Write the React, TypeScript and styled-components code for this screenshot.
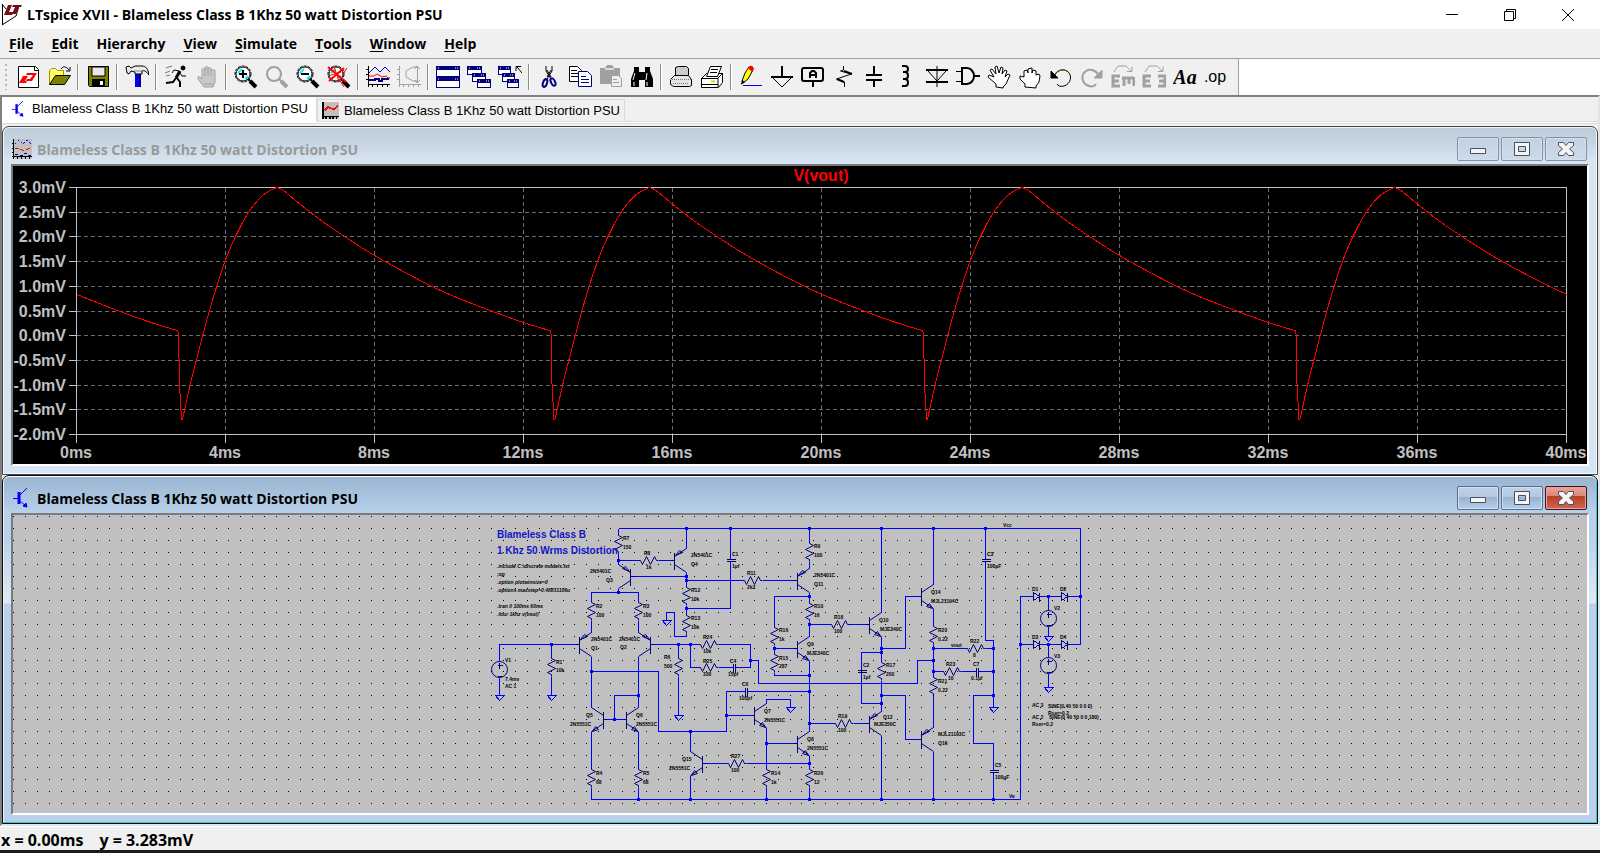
import React from "react";
import styled, { createGlobalStyle, css } from "styled-components";

const UI = `"Open Sans", "Noto Sans", sans-serif`;
const ARIAL = `"Liberation Sans", Arial, sans-serif`;

const GlobalStyle = createGlobalStyle`
  * { box-sizing: border-box; }
  body { margin: 0; background: #f0f0f0; }
  button { margin: 0; padding: 0; border: 0; background: none; font: inherit; color: inherit; }
  svg { display: block; }
`;

/* ---------- frame ---------- */

const Shell = styled.div`
  display: flex;
  flex-direction: column;
  min-height: 100vh;
  font-family: ${UI};
  color: #000;
  background: #f0f0f0;
`;

const TitleBar = styled.header`
  display: flex;
  align-items: center;
  height: 29px;
  padding-right: 3px;
  background: #fff;
`;

const AppTitle = styled.h1`
  flex: 1;
  margin: 0 0 0 5px;
  font-size: 14px;
  line-height: 28px;
  font-weight: 700;
`;

const SystemButton = styled.button`
  display: flex;
  align-items: center;
  justify-content: center;
  width: 58px;
  height: 29px;
`;

const MenuBar = styled.nav`
  display: flex;
  height: 30px;
  border-bottom: 1px solid #a0a0a0;
`;

const MenuItem = styled.button`
  padding: 0 9px;
  font-size: 14px;
  line-height: 28px;
  font-weight: 700;
  u { text-underline-offset: 2px; }
`;

const ToolbarRow = styled.div`
  display: flex;
  height: 36px;
  background: #fff;
`;

const Toolbar = styled.div`
  display: flex;
  align-items: center;
  padding: 0 7px 0 5px;
  border-right: 1px solid #a0a0a0;
  background: #f0f0f0;
`;

const Grip = styled.span`
  width: 2px;
  height: 26px;
  margin-right: 5px;
  background: repeating-linear-gradient(#b8b8b8 0 2px, transparent 2px 5px);
`;

const ToolButton = styled.button`
  display: flex;
  align-items: center;
  justify-content: center;
  width: 31px;
  height: 30px;
`;

const Separator = styled.span`
  width: 2px;
  height: 26px;
  margin: 0 3px;
  border-left: 1px solid #8c8c8c;
  border-right: 1px solid #fff;
`;

const Workspace = styled.main`
  flex: 1;
  border: 2px solid;
  border-color: #808080 #e3e3e3 #e3e3e3 #808080;
  background: #f0f0f0;
`;

const TabStrip = styled.div`
  display: flex;
  align-items: flex-start;
  height: 29px;
  background: linear-gradient(#f0f0f0 24px, #d9d9d9 24px 25px, #fff 25px 26px, #d9d9d9 26px 27px, #f0f0f0 27px);
`;

const Tab = styled.button<{ $active?: boolean }>`
  display: flex;
  align-items: center;
  border: 1px solid #d9d9d9;
  font-family: ${ARIAL};
  font-size: 13px;
  line-height: 20px;
  white-space: nowrap;
  ${(p) =>
    p.$active
      ? css`
          gap: 5px;
          height: 25px;
          padding: 0 8px 2px;
          border-color: #fff #d9d9d9 #fff #fff;
          background: #fff;
        `
      : css`
          gap: 5px;
          height: 23px;
          margin-top: 2px;
          padding: 0 4px;
          background: #f0f0f0;
        `}
`;

/* ---------- child windows ---------- */

const ChildWindow = styled.section<{ $active?: boolean }>`
  padding: 1px 8px 8px;
  border: 1px solid ${(p) => (p.$active ? "#0a0a0a" : "#45454f")};
  border-radius: 7px 7px 0 0;
  ${(p) =>
    p.$active
      ? css`
          background: linear-gradient(#99b4d1, #b9d1ea 37px, #b9d1ea 60px, #dfeaf6 127px, #b9d1ea 128px);
          box-shadow: inset 0 1px #fff, inset -1px -1px #2fc7dd, inset 1px 0 #e8f2fb;
        `
      : css`
          background: linear-gradient(#bfcddb, #c5d3e1 14px, #d7e4f2 34px);
          box-shadow: inset 0 1px #eef3f8, inset -1px -1px #f4f8fc, inset 1px 0 #f4f8fc;
        `}
`;

const ChildTitle = styled.div`
  display: flex;
  align-items: center;
  height: 36px;
  padding: 6px 2px 0 1px;
`;

const ChildCaption = styled.h2<{ $active?: boolean }>`
  flex: 1;
  margin: 0 0 0 5px;
  padding-top: 2px;
  font-size: 14px;
  line-height: 24px;
  font-weight: 700;
  color: ${(p) => (p.$active ? "#000" : "#999")};
`;

const CaptionButtons = styled.div`
  display: flex;
  gap: 2px;
`;

const CaptionButton = styled.button<{ $tone: "faded" | "blue" | "red" }>`
  display: flex;
  align-items: center;
  justify-content: center;
  width: 42px;
  height: 24px;
  border-radius: 2px;
  ${(p) =>
    p.$tone === "faded"
      ? css`
          border: 1px solid #8492b0;
          background: linear-gradient(#c3d1e0, #cddbe9);
          box-shadow: inset 0 0 0 1px #d5e0ec;
        `
      : p.$tone === "blue"
        ? css`
            border: 1px solid #5c6f90;
            background: linear-gradient(#bed2e8, #b3c9e2 45%, #98b1cd 46%, #b4cfec);
            box-shadow: inset 0 0 0 1px #cfe0f2;
          `
        : css`
            border: 1px solid #43131b;
            background: linear-gradient(#e7a59a, #db8676 42%, #b7402a 43%, #cf6650);
            box-shadow: inset 0 0 0 1px #e5a698;
          `}
`;

const Client = styled.div<{ $dark?: boolean }>`
  border: 2px solid;
  border-color: #7a7a7a #fff #fff #7a7a7a;
  background: ${(p) => (p.$dark ? "#000" : "#c0c0c0")};
  svg { width: 100%; height: auto; }
`;

const StatusBar = styled.footer`
  display: flex;
  gap: 16px;
  height: 27px;
  padding-left: 1px;
  border-top: 1px solid #fff;
  border-bottom: 3px solid #1c1c1c;
  font-size: 16px;
  line-height: 26px;
  font-weight: 700;
`;

/* ---------- toolbar icons ---------- */

const K = "#000";
const N = "#000080";
const G = "#a0a0a0";

const Lens = ({ c = K, mark }: { c?: string; mark?: React.ReactNode }) => (
  <g fill="none" stroke={c}>
    <circle cx="9" cy="9" r="7" strokeWidth={c === K ? 1 : 2} fill={c === K ? "#fff" : "none"} />
    {c === K && <circle cx="9" cy="9" r="8" strokeDasharray="3 1" />}
    {c === K && <path d="M4 8l4-4M11 14l3-3" stroke="#0ee" strokeWidth="2" />}
    <path d="M14 14l2 2" strokeWidth="2" />
    <path d="M16 16l6 6" strokeWidth="4" />
    {mark}
  </g>
);

const Pane = ({ x, y, w = 11, h = 9 }: { x: number; y: number; w?: number; h?: number }) => (
  <g>
    <rect x={x + 0.5} y={y + 0.5} width={w - 1} height={h - 1} fill="#fff" stroke={N} />
    <rect x={x} y={y} width={w} height="4" fill={N} />
    <path d={`M${x + 2} ${y + 2}h1M${x + w - 5} ${y + 2}h1M${x + w - 3} ${y + 2}h1`} stroke="#fff" />
  </g>
);

const icons: Record<string, React.ReactNode> = {
  "New schematic": (
    <g>
      <path d="M2.500 1.500h17l3 3v18h-20z" fill="#fff" stroke={K} />
      <path d="M18.500 1.500v4h4" fill="none" stroke={K} />
      <path d="M7 11h5l-3 5h2l-1 2H3zM11 8h10l-5 8h-6l1-2h3l3-4h-7z" fill="#f00" />
    </g>
  ),
  Open: (
    <g stroke={K}>
      <path d="M2.500 19.500v-14l2-2h4l2 2h6v6h-7z" fill="#ff6" stroke="#a09000" />
      <path d="M2.500 19.500l6-9h15l-6 9z" fill="#808000" />
      <path d="M14 4c2-3 5-3 8 1M23 2v4h-4" fill="none" />
    </g>
  ),
  Save: (
    <g>
      <path d="M2.500 1.500h20v20h-19l-1-1z" fill="#808000" stroke={K} />
      <rect x="6" y="2" width="13" height="9" fill="#e8e8e8" stroke={K} />
      <rect x="6" y="14" width="13" height="8" fill={K} />
      <rect x="14" y="16" width="3" height="4" fill="#fff" />
    </g>
  ),
  "Control panel": (
    <g>
      <path d="M10 9h6v13h-6z" fill="#00f" />
      <path d="M14 9h2v13h-2z" fill={N} />
      <path d="M1 2l3-1 2 2 4-2h7c4 0 6 3 7 9-3-4-5-5-7-4v3h-7v-2l-4-1-2 3-2-1z" fill="#e8e8e8" stroke={K} />
      <path d="M9 6h8" stroke="#888" />
    </g>
  ),
  Run: (
    <g fill="none" stroke={K}>
      <circle cx="19" cy="3" r="2" fill={K} />
      <path d="M16 6l-4 7" strokeWidth="3" />
      <path d="M15 6l-5-1-2 3M16 8l2 3h4" />
      <path d="M12 13l-3 4-7 1M13 13l3 4v5" strokeWidth="2" />
      <path d="M2 3l6-2M1 8l5-2M2 11l4-1" stroke="#777" />
    </g>
  ),
  Halt: (
    <g stroke={G}>
      <path
        d="M7 14V5c0-2 3-2 3 0V3c0-2 3-2 3 0v1c0-2 3-2 3 0v2c0-2 4-2 4 0v11l-2 5h-9l-6-8c-1-2 1-3 2-2z"
        fill="#c8c8c8"
      />
      <path d="M10 5v6M13 4v7M16 6v5M9 19h9" />
    </g>
  ),
  "Zoom in": <Lens mark={<path d="M9 5v8M5 9h8" strokeWidth="2" />} />,
  Pan: <Lens c={G} />,
  "Zoom out": <Lens mark={<path d="M5 9h8" strokeWidth="2" />} />,
  "Zoom full": (
    <Lens
      mark={
        <g stroke="#f00">
          <path d="M1 2l18 15M17 3L2 16" strokeWidth="2" />
          <path d="M7 1l5 16M1 11l13-4M12 14l5 8M16 9l4-6" />
        </g>
      }
    />
  ),
  Autorange: (
    <g fill="none" stroke={K}>
      <path d="M2.500 1v21M2 19.500h22M0 4.500h3M0 9.500h3M0 14.500h3M6.500 19v3M11.500 19v3M16.500 19v3M21.500 19v3" />
      <path d="M3 8l6-6 5 5 5-5 5 5" stroke="#00c" />
      <path d="M3 11h5l3-2 5 3 4-1 2 2h2" stroke="#f00" />
      <path d="M3 15h6v-1h4v2h3v-2h7" stroke={N} strokeWidth="2" />
    </g>
  ),
  Plot: (
    <g fill="none" stroke={G}>
      <path d="M2.500 1v21M2 19.500h22M0 4.500h3M0 9.500h3M0 14.500h3M6.500 19v3M11.500 19v3M16.500 19v3M21.500 19v3" />
      <path d="M20 2h-4l-7 4v6l7 4h4M20.500 2v15M18 4l2-3 3 3M18 15l2 3 3-3" />
    </g>
  ),
  "Tile windows": (
    <g>
      <Pane x={0} y={1} w={24} h={11} />
      <Pane x={0} y={12} w={24} h={11} />
    </g>
  ),
  "Cascade windows": (
    <g>
      <Pane x={0} y={1} w={15} />
      <Pane x={5} y={8} w={14} />
      <Pane x={10} y={14} w={14} />
    </g>
  ),
  "Close windows": (
    <g>
      <Pane x={0} y={1} w={13} />
      <Pane x={4} y={8} w={13} />
      <Pane x={9} y={14} w={12} />
      <path d="M24 8l-5-6M18 6V1.500h5" fill="none" stroke={K} />
    </g>
  ),
  Cut: (
    <g fill="none">
      <path d="M9 1v5l5 8M15 1v5l-5 8" stroke={K} />
      <path d="M10 5l4 7M14 5l-4 7" stroke={K} />
      <ellipse cx="8" cy="18" rx="2" ry="4" stroke={N} strokeWidth="2" transform="rotate(20 8 18)" />
      <ellipse cx="16" cy="17" rx="2" ry="4" stroke={N} strokeWidth="2" transform="rotate(-25 16 17)" />
    </g>
  ),
  Copy: (
    <g fill="#fff">
      <path d="M1.500 1.500h8l4 4v11h-12z" stroke={K} />
      <path d="M3 5.500h6M3 8.500h8M3 11.500h8" stroke={K} />
      <path d="M10.500 6.500h9l4 4v11h-13z" stroke={N} />
      <path d="M13 11.500h5M13 14.500h8M13 17.500h8" stroke={N} />
    </g>
  ),
  Paste: (
    <g>
      <path d="M1 3h5l2-3h5l2 3h6v16H1z" fill={G} />
      <path d="M6 4h9" stroke="#ddd" strokeWidth="2" />
      <path d="M12.500 10.500h7l3 3v8h-10z" fill="#eee" stroke={G} />
      <path d="M14 14.500h4M14 17.500h6" stroke={G} />
    </g>
  ),
  Find: (
    <g fill={K}>
      <path d="M4 2h5v5h6V2h5v4l3 8v8h-8v-7h-6v7H1v-8l3-8z" />
      <path d="M5 8l-2 7M17 8l-1 7M4 17v4M17 17v4" stroke="#fff" />
    </g>
  ),
  "Print setup": (
    <g fill="#e4e4e4" stroke={K}>
      <path d="M6.500 10.500v-8l3-1h8l2 2v7" fill="#ccc" />
      <path d="M1.500 14.500l4-4h14l3 4v6l-2 1h-16l-3-2z" />
      <path d="M1 14.500h21M4 18.500h15" stroke="#777" strokeDasharray="1 1" />
    </g>
  ),
  Print: (
    <g fill="#fff" stroke={K}>
      <path d="M1.500 13.500l5-5h16v9l-4 5h-17z" />
      <path d="M6.500 11.500l4-10h11l-4 10z" />
      <path d="M11 4.500h7M10 7.500h7M1 13.500h17v9M18 13l5-5M2 19.500h16" />
      <path d="M11 16.500h4" stroke="#dd0" strokeWidth="2" />
    </g>
  ),
  "Draw wire": (
    <g>
      <path d="M3 16l3-8 4-6 4 3-5 9-5 4z" fill="#ff0" stroke={K} />
      <path d="M9 3c1-3 5-3 6 1l-2 3z" fill="#f00" />
      <path d="M2 20l1-5 3 2z" fill={K} />
      <path d="M4 20.500h19" stroke="#00f" />
    </g>
  ),
  Ground: (
    <g fill="none" stroke={K}>
      <path d="M12 1v11" strokeWidth="2" />
      <path d="M1 12h22" strokeWidth="2" />
      <path d="M2 12l10 10 10-10" />
    </g>
  ),
  "Label net": (
    <g fill="none" stroke={K} strokeWidth="2">
      <rect x="1" y="3" width="21" height="13" rx="2" />
      <path d="M12 16v6M9 13V8l2-2h2l2 2v5M9 10h6" />
    </g>
  ),
  Resistor: (
    <g fill="none" stroke={K}>
      <path d="M11.500 1v4l-3 1 11 3-15 5 8 3v5" />
      <path d="M12 6l8 3M5 14l7 3" strokeWidth="2" />
    </g>
  ),
  Capacitor: (
    <g stroke={K} strokeWidth="2">
      <path d="M11 1v8M11 15v7" />
      <path d="M3 10h16M3 15h16" />
    </g>
  ),
  Inductor: (
    <path d="M8 1h3c4 0 4 6 0 6H9h2c4 0 4 7 0 7H9h2c4 0 4 7 0 7H8" fill="none" stroke={K} strokeWidth="2" />
  ),
  Diode: (
    <g fill="none" stroke={K}>
      <path d="M12 1v21M3 6l9 10 9-10" />
      <path d="M1 5h22M1 17h22" strokeWidth="2" />
    </g>
  ),
  Component: (
    <g fill="none" stroke={K}>
      <path d="M0 6.500h6M0 16.500h6" />
      <path d="M6 3v16h5c4 0 7-4 7-8s-3-8-7-8zM18 11h6" strokeWidth="2" />
    </g>
  ),
  Move: (
    <path
      d="M9 22v-3L1 12l1-2 5 2-4-7 2-1 4 5-1-7 2-1 2 7 2-6 2 1-1 6 3-4 2 1-2 6 3-3 2 1-4 9-3 3v1z"
      fill="#fff" stroke={K}
    />
  ),
  Drag: (
    <path
      d="M7 22v-3l-5-5v-3l4 1V6l3-1 1 3V4l4-1v5l1-3 3 1v4l3-1 1 2-1 6-3 4v2z"
      fill="#fff" stroke={K}
    />
  ),
  Undo: (
    <g fill="none" stroke={K}>
      <path d="M5 11c2-5 8-8 13-5 6 4 4 13-3 15-3 1-6 0-7-2" />
      <path d="M6 10c3-5 8-6 12-4" stroke="#665c00" />
      <path d="M2 6v7h7zM4 10l-2 3" fill={K} />
    </g>
  ),
  Redo: (
    <g fill="none" stroke={G}>
      <path d="M19 11C17 6 11 3 6 6c-6 4-4 13 3 15 3 1 6 0 7-2" strokeWidth="2" />
      <path d="M22 5v8h-8z" fill={G} />
    </g>
  ),
  Rotate: (
    <g fill="none" stroke={G}>
      <path d="M3 7l4-6h8l5 5M21 1.500v5h-5" />
      <path d="M9 11H2v10h7M2 16h6M11 13h12M13 13v8M18 13v6M23 12v9" strokeWidth="3" />
    </g>
  ),
  Mirror: (
    <g fill="none" stroke={G}>
      <path d="M3 7l4-6h8l5 5M21 1.500v5h-5" />
      <path d="M9 11H2v10h7M2 16h6M16 11h7v10h-7M23 16h-6" strokeWidth="3" />
    </g>
  ),
  Text: (
    <text x="12" y="19" textAnchor="middle" fontFamily="'Liberation Serif', serif" fontSize="20" fontWeight="700" fontStyle="italic">
      Aa
    </text>
  ),
  "SPICE directive": (
    <text x="11" y="17" textAnchor="middle" fontFamily="'Liberation Sans', sans-serif" fontSize="16">
      .op
    </text>
  ),
};

const toolbarGroups: string[][] = [
  ["New schematic", "Open"],
  ["Save"],
  ["Control panel"],
  ["Run", "Halt"],
  ["Zoom in", "Pan", "Zoom out", "Zoom full"],
  ["Autorange", "Plot"],
  ["Tile windows", "Cascade windows", "Close windows"],
  ["Cut", "Copy", "Paste", "Find"],
  ["Print setup", "Print"],
  ["Draw wire", "Ground", "Label net", "Resistor", "Capacitor", "Inductor", "Diode", "Component", "Move", "Drag",
    "Undo", "Redo", "Rotate", "Mirror", "Text", "SPICE directive"],
];

const AppLogo = () => (
  <svg width="22" height="26" viewBox="0 0 22 26">
    <path d="M2.500 2v21M2 23l14-9M19 4l-3 10M2 2l4 5" fill="none" stroke="#000" />
    <path d="M8 3h4l-3 7h4l-1 3H4zM13 3h9l-1 2h-2l-3 7h-4l3-7h-3z" fill="#7a0c14" />
  </svg>
);

const TransistorIcon = ({ size }: { size: number }) => (
  <svg width={size} height={size} viewBox="0 0 20 20" fill="none" stroke="#00f">
    <path d="M1 10.500h6M8 7l7-7M8 13l7 6" />
    <path d="M7 4v12" strokeWidth="3" />
    <path d="M15 19l-4-1 3-3z" fill="#00f" />
  </svg>
);

const TraceIcon = ({ size, full }: { size: number; full?: boolean }) => (
  <svg width={size} height={size} viewBox="0 0 20 20" fill="none" shapeRendering="crispEdges">
    <path d="M1 0h19v20H1z" fill="#c0c0c0" />
    <path d="M1.500 0v20M0 17h20M0 4h2M0 9h2M0 13h2M5 17v3M9 17v3M13 17v3M17 17v3" stroke="#000" strokeWidth={full ? 1 : 2} />
    {full && <path d="M3 5l4-4 4 4 4-4 4 4" stroke="#00f" strokeDasharray="2 2" />}
    {full && <path d="M3 15h4v1h4v-2h4v2h4" stroke="#000080" strokeDasharray="3 3" />}
    <path
      d={full ? "M3 9h4l3 2h4l4-2" : "M3 10l4-4 5 2h3l4-4"}
      stroke="#f00"
      strokeWidth={full ? 1 : 2}
      strokeDasharray={full ? "4 2" : undefined}
    />
  </svg>
);

/* ---------- waveform plot ---------- */

type Point = [number, number];

const X0 = 76;
const MS = 37.25;
const Y0 = 187;
const STEP = 24.7;
const edge: Point[] = [[177, 330], [178, 333], [179, 383], [181, 419], [182, 419]];
const sweep: Point[] = [
  [182, 419], [190, 383], [202, 336], [209, 310], [218, 280], [226, 257], [235, 236], [248, 212], [262, 195], [276, 187],
];
const decay: Point[] = [
  [276, 187], [283, 190], [300, 204], [322, 221], [344, 236], [374, 255], [414, 277], [449, 294], [495, 312],
  [523, 322], [549, 330],
];

/* Catmull-Rom interpolation through the sample points */
const smooth = (pts: Point[]): Point[] =>
  pts.slice(0, -1).flatMap((p1, i) => {
    const p0 = pts[Math.max(i - 1, 0)];
    const p2 = pts[i + 1];
    const p3 = pts[Math.min(i + 2, pts.length - 1)];
    return [0, 0.25, 0.5, 0.75].map(
      (t) =>
        [0, 1].map(
          (k) =>
            0.5 *
            (2 * p1[k] +
              (p2[k] - p0[k]) * t +
              (2 * p0[k] - 5 * p1[k] + 4 * p2[k] - p3[k]) * t * t +
              (3 * p1[k] - p0[k] - 3 * p2[k] + p3[k]) * t * t * t),
        ) as Point,
    );
  });

const cycle = [...edge, ...smooth(sweep), ...smooth(decay)];
const trace = [-1, 0, 1, 2, 3]
  .flatMap((k) => cycle.map(([x, y]) => [x + k * 372.5, y] as Point))
  .filter(([x]) => x >= X0 && x <= 1567);

const PlotView = () => (
  <svg viewBox="13 166 1574 298" fontFamily={ARIAL} fontSize="16" fontWeight="700" fill="#c0c0c0">
    <g transform="translate(.5 .5)" fill="none" shapeRendering="crispEdges">
      <g stroke="#6e6e6e" strokeDasharray="4 3">
        {Array.from({ length: 9 }, (_, i) => (
          <path key={i} d={`M${X0} ${Math.round(Y0 + (i + 1) * STEP)}H1566`} />
        ))}
        {Array.from({ length: 9 }, (_, i) => (
          <path key={i} d={`M${Math.round(X0 + (i + 1) * 4 * MS)} ${Y0}V434`} />
        ))}
      </g>
      <g stroke="#c0c0c0">
        <path d="M68 187H1566V442M76 187V442M68 434H1566" />
        {Array.from({ length: 9 }, (_, i) => (
          <path key={i} d={`M68 ${Math.round(Y0 + (i + 1) * STEP)}H76M${Math.round(X0 + (i + 1) * 4 * MS)} 434V442`} />
        ))}
      </g>
      <polyline points={trace.map((p) => p.join(",")).join(" ")} stroke="#f00" />
    </g>
    <text x="821" y="181" textAnchor="middle" fill="#f00">V(vout)</text>
    {Array.from({ length: 11 }, (_, i) => (
      <text key={i} x="66" y={Math.round(Y0 + i * STEP) + 6} textAnchor="end">
        {(3 - i * 0.5).toFixed(1)}mV
      </text>
    ))}
    {Array.from({ length: 11 }, (_, i) => (
      <text key={i} x={Math.round(X0 + i * 4 * MS)} y="458" textAnchor="middle">
        {i * 4}ms
      </text>
    ))}
  </svg>
);

/* ---------- schematic ---------- */

const dots = Array.from({ length: 132 }, (_, i) => 13 + Math.round((1565 * i) / 131))
  .flatMap((x) => Array.from({ length: 25 }, (_, j) => `M${x} ${516 + 12 * j - (j > 12 ? 1 : 0)}h1`))
  .join("");

const wires = [
  "M618 528H1080V644H1068M1068 596H1080M618 528V533M618 553V564M618 560H638M658 560H670",
  "M634 576H686M686 572V585M686 580H742M762 580H793M686 528V548M618 588V592M591 600V592H638V600",
  "M591 620V632M638 620V632M575 644H499V661M499 677V695M551 644V656M551 676V695M591 656V707",
  "M591 671H658V731H726V691H744M748 691H809M726 715H750M638 656V707M638 695H614V719M607 719H622",
  "M591 731V767M591 787V799M638 731V767M638 787V799M591 799H1020V596H1032M1020 644H1032",
  "M654 644H698M690 644V667H698M678 644V656M678 676V715M718 644H750V667H736M718 667H732",
  "M750 660H758V683H917V660H933M686 605V613M686 608H730V562M730 558V528M686 633V636H674V612H666V620",
  "M809 528V541M809 561V568M809 592V601M809 596H774V625M774 645V652M774 648H793M774 672V675H809",
  "M809 621V636M809 624H829M849 624H865M809 660V731M809 723H833M853 723H865M766 703V699H790V707",
  "M766 727V767M766 743H793M766 787V799M809 755V767M746 763H809M706 763H726M690 731V751M690 775V799M809 787V799",
  "M881 528V612M881 636V660M881 652H861V669M861 673V703H881M881 680V711M881 735V799M881 648H905V596H917",
  "M881 695H905V739H917M933 528V584M933 608V624M933 644V675M933 648H965M985 648H993M933 671H941",
  "M961 671H975M979 671H993M933 695V727M933 751V799M985 528V558M985 562V640H993V707M993 695H973V743H993V769M993 773V799",
  "M1039 596H1061M1048 596V610M1048 626V636M1039 644H1061M1048 644V657M1048 673V687",
].join("");

const nodes: Point[] = [
  [686, 528], [730, 528], [809, 528], [881, 528], [933, 528], [985, 528], [618, 560], [686, 576], [686, 580],
  [618, 592], [686, 608], [809, 596], [551, 644], [591, 671], [678, 644], [690, 644], [638, 695], [614, 719],
  [690, 731], [726, 715], [750, 660], [774, 648], [809, 624], [809, 675], [809, 691], [809, 723], [766, 743],
  [809, 763], [638, 799], [690, 799], [766, 799], [809, 799], [881, 799], [933, 799], [993, 799], [881, 648],
  [881, 652], [881, 695], [881, 703], [933, 648], [933, 660], [933, 671], [993, 648], [993, 671], [993, 695],
  [1048, 596], [1048, 644], [1020, 644], [1080, 596],
];

const verticalR: Point[] = [
  [618, 533], [591, 600], [638, 600], [686, 585], [686, 613], [809, 541], [809, 601], [774, 625], [774, 652],
  [551, 656], [678, 656], [881, 660], [933, 624], [933, 675], [591, 767], [638, 767], [766, 767], [809, 767],
];
const horizontalR: Point[] = [
  [638, 560], [742, 580], [829, 624], [698, 644], [698, 667], [726, 763], [833, 723], [965, 648], [941, 671],
];
const verticalC: Point[] = [[730, 560], [861, 671], [985, 560], [993, 771]];
const horizontalC: Point[] = [[734, 667], [746, 691], [977, 671]];
const grounds: Point[] = [
  [499, 695], [551, 695], [666, 620], [678, 715], [790, 707], [993, 707], [1048, 636], [1048, 687],
];
const sources: Point[] = [[499, 669], [1048, 618], [1048, 665]];
const diodes: Point[] = [[1036, 596], [1064, 596], [1036, 644], [1064, 644]];

/* x of the collector and emitter pins, y of the base, side of the base (1 = left), polarity */
const transistors: [number, number, number, "n" | "p"][] = [
  [618, 576, -1, "p"], [686, 560, 1, "p"], [591, 644, 1, "p"], [638, 644, -1, "p"], [591, 719, -1, "n"],
  [638, 719, 1, "n"], [690, 763, -1, "n"], [766, 715, 1, "n"], [809, 743, 1, "n"], [809, 648, 1, "n"],
  [809, 580, 1, "p"], [881, 624, 1, "n"], [881, 723, 1, "p"], [933, 596, 1, "n"], [933, 739, 1, "p"],
];

const labels: [number, number, string][] = [
  [623, 540, "R7"], [623, 549, "150"], [644, 555, "R8"], [646, 569, "1k"], [590, 573, "2N5401C"], [606, 582, "Q3"],
  [691, 557, "2N5401C"], [691, 566, "Q4"], [596, 608, "R2"], [596, 617, "100"], [643, 608, "R3"], [643, 617, "100"],
  [591, 641, "2N5401C"], [591, 650, "Q1"], [619, 641, "2N5401C"], [620, 649, "Q2"], [505, 662, "V1"],
  [505, 681, "7.4mv"], [505, 688, "AC 1"], [556, 664, "R1"], [556, 672, "10k"], [664, 659, "R6"], [664, 668, "500"],
  [586, 717, "Q5"], [570, 726, "2N5551C"], [636, 717, "Q6"], [636, 726, "2N5551C"], [596, 775, "R4"], [596, 784, "68"],
  [643, 775, "R5"], [643, 784, "68"], [691, 592, "R12"], [691, 601, "10k"], [691, 620, "R13"], [691, 629, "10k"],
  [732, 556, "C1"], [732, 568, "1µf"], [747, 575, "R11"], [747, 589, "2k2"], [814, 548, "R9"], [814, 557, "100"],
  [814, 577, "2N5401C"], [814, 586, "Q11"], [814, 608, "R10"], [814, 617, "16"], [703, 639, "R24"], [703, 653, "10k"],
  [703, 663, "R25"], [703, 676, "330"], [730, 663, "C4"], [728, 676, "15pf"], [779, 632, "R16"], [779, 641, "1k"],
  [779, 660, "R15"], [779, 668, "287"], [807, 646, "Q9"], [807, 655, "MJE340C"], [742, 686, "C6"], [739, 700, "100pf"],
  [764, 713, "Q7"], [764, 722, "2N5551C"], [807, 741, "Q8"], [807, 750, "2N5551C"], [682, 761, "Q15"],
  [669, 770, "2N5551C"], [731, 758, "R27"], [731, 772, "100"], [771, 775, "R14"], [771, 784, "1k"], [814, 775, "R26"],
  [814, 784, "12"], [834, 619, "R18"], [834, 633, "100"], [838, 718, "R19"], [838, 732, "100"], [879, 622, "Q10"],
  [880, 631, "MJE340C"], [863, 667, "C2"], [863, 679, "1µf"], [886, 667, "R17"], [886, 676, "200"], [883, 719, "Q12"],
  [874, 726, "MJE350C"], [931, 594, "Q14"], [931, 603, "MJL21194C"], [938, 632, "R20"], [938, 641, "0.22"],
  [938, 683, "R21"], [938, 692, "0.22"], [951, 647, "vout"], [970, 643, "R22"], [973, 657, "8"], [946, 666, "R23"],
  [948, 680, "10"], [973, 666, "C7"], [971, 680, "0.1µf"], [938, 736, "MJL21193C"], [938, 745, "Q16"],
  [987, 556, "C3"], [987, 568, "100µF"], [995, 767, "C5"], [995, 779, "100µF"], [1003, 527, "Vcc"], [1009, 798, "Ve"],
  [1032, 591, "D1"], [1060, 591, "D2"], [1032, 639, "D3"], [1060, 639, "D4"], [1054, 610, "V2"], [1054, 658, "V3"],
  [1032, 707, "AC 3"], [1032, 719, "AC 2"],
  [1048, 708, "SINE(0 40 50 0 0 0)"], [1048, 715, "Rser=0.2"], [1049, 719, "SINE(0 40 50 0 0 180)"], [1032, 726, "Rser=0.2"],
];

const directives: [number, string][] = [
  [568, ".include C:\\discrete models.txt"],
  [576, ";op"],
  [584, ".option plotwinsize=0"],
  [592, ".options maxstep=0.48831106u"],
  [608, ".tran 0 100ms 60ms"],
  [616, ".four 1khz v(vout)"],
];

const SchematicView = () => (
  <svg viewBox="13 515 1574 298" fontFamily={ARIAL}>
    <path d={dots} transform="translate(0 .5)" stroke="#000" shapeRendering="crispEdges" />
    <g transform="translate(.5 .5)" fill="none" shapeRendering="crispEdges">
      <g stroke="#000080">
        {verticalR.map(([x, y]) => (
          <path key={`${x}-${y}`} d={`M${x} ${y}v2l4 2l-8 4l8 4l-8 4l4 2v2`} shapeRendering="auto" />
        ))}
        {horizontalR.map(([x, y]) => (
          <path key={`${x}-${y}`} d={`M${x} ${y}h2l2 4l4 -8l4 8l4 -8l2 4h2`} shapeRendering="auto" />
        ))}
        {verticalC.map(([x, y]) => (
          <path key={`${x}-${y}`} d={`M${x - 4} ${y - 1}h9M${x - 4} ${y + 1}h9M${x} ${y - 5}v4M${x} ${y + 1}v5`} />
        ))}
        {horizontalC.map(([x, y]) => (
          <path key={`${x}-${y}`} d={`M${x - 1} ${y - 4}v9M${x + 1} ${y - 4}v9M${x - 5} ${y}h4M${x + 1} ${y}h5`} />
        ))}
        {sources.map(([x, y]) => (
          <g key={`${x}-${y}`}>
            <circle cx={x} cy={y} r="8" shapeRendering="auto" />
            <path d={`M${x - 2} ${y - 4}h5M${x} ${y - 7}v6M${x - 2} ${y + 7}h5`} />
          </g>
        ))}
        {diodes.map(([x, y]) => (
          <path key={`${x}-${y}`} d={`M${x - 6} ${y}h3v-4l6 4l-6 4v-4M${x + 3} ${y - 4}v9M${x + 3} ${y}h4`} />
        ))}
        {transistors.map(([x, y, s, t]) => (
          <g key={`${x}-${y}`} transform={`translate(${x} ${y}) scale(${s} 1)`}>
            <path d="M-12 -8V9M-16 0H-12" />
            <path d="M-12 -4L0 -12M-12 4L0 12" shapeRendering="auto" />
            <path d={t === "n" ? "M-1 12L-7 10L-4 7z" : "M-11 -5L-7 -10L-4 -8z"} shapeRendering="auto" />
          </g>
        ))}
      </g>
      <path d={wires} stroke="#00f" />
      {grounds.map(([x, y]) => (
        <path key={`${x}-${y}`} d={`M${x - 4} ${y}h9l-5 5z`} stroke="#00f" />
      ))}
    </g>
    {nodes.map(([x, y]) => (
      <rect key={`${x}-${y}`} x={x - 1} y={y - 1} width="3" height="3" fill="#00f" />
    ))}
    <g fontSize="10" fontWeight="700" fill="#1414c8">
      <text x="497" y="538">Blameless Class B</text>
      <text x="497" y="554">1 Khz 50 Wrms Distortion</text>
    </g>
    <g fontSize="5" fontWeight="700" fontStyle="italic">
      {directives.map(([y, t]) => (
        <text key={y} x="497" y={y}>{t}</text>
      ))}
    </g>
    <g fontSize="5" fontWeight="700">
      {labels.map(([x, y, t], i) => (
        <text key={i} x={x} y={y}>{t}</text>
      ))}
    </g>
  </svg>
);

/* ---------- composition ---------- */

const menus: [string, string, string][] = [
  ["", "F", "ile"], ["", "E", "dit"], ["H", "i", "erarchy"], ["", "V", "iew"],
  ["", "S", "imulate"], ["", "T", "ools"], ["", "W", "indow"], ["", "H", "elp"],
];

const DOC = "Blameless Class B 1Khz 50 watt Distortion PSU";

const Caption = ({ active }: { active?: boolean }) => {
  const tone = active ? "blue" : "faded";
  const ink = { fill: "#f4f4f4", stroke: "#4a5064" };
  return (
    <CaptionButtons>
      <CaptionButton $tone={tone} aria-label="Minimize">
        <svg width="18" height="16" {...ink}><path d="M1.500 7.500h15v5h-15z" /></svg>
      </CaptionButton>
      <CaptionButton $tone={tone} aria-label="Maximize">
        <svg width="18" height="16" {...ink}>
          <path fillRule="evenodd" d="M1.500 1.500h15v13h-15zM5.500 5.500v5h7v-5z" />
        </svg>
      </CaptionButton>
      <CaptionButton $tone={active ? "red" : tone} aria-label="Close">
        <svg width="18" height="16" {...ink}>
          <path d="M1.500 1.500h5l2.500 3 2.500-3h5v3l-4 3.500 4 3.500v3h-5l-2.500-3-2.500 3h-5v-3l4-3.500-4-3.500z" />
        </svg>
      </CaptionButton>
    </CaptionButtons>
  );
};

export default function App() {
  return (
    <Shell>
      <GlobalStyle />
      <TitleBar>
        <AppLogo />
        <AppTitle>LTspice XVII - {DOC}</AppTitle>
        <SystemButton aria-label="Minimize">
          <svg width="12" height="12" stroke="#000"><path d="M0 5.500h12" /></svg>
        </SystemButton>
        <SystemButton aria-label="Restore">
          <svg width="12" height="12" fill="none" stroke="#000"><path d="M.5 2.500h9v9h-9zM2.500 2.500v-2h9v9h-2" /></svg>
        </SystemButton>
        <SystemButton aria-label="Close">
          <svg width="12" height="12" stroke="#000"><path d="M0 0l12 12M12 0L0 12" /></svg>
        </SystemButton>
      </TitleBar>

      <MenuBar>
        {menus.map(([a, k, b]) => (
          <MenuItem key={k + b}>{a}<u>{k}</u>{b}</MenuItem>
        ))}
      </MenuBar>

      <ToolbarRow>
        <Toolbar role="toolbar">
          <Grip />
          {toolbarGroups.map((group, i) => (
            <React.Fragment key={i}>
              {i > 0 && <Separator />}
              {group.map((name) => (
                <ToolButton key={name} aria-label={name}>
                  <svg width="24" height="24" viewBox="0 0 24 24">{icons[name]}</svg>
                </ToolButton>
              ))}
            </React.Fragment>
          ))}
        </Toolbar>
      </ToolbarRow>

      <Workspace>
        <TabStrip role="tablist">
          <Tab $active role="tab" aria-selected="true"><TransistorIcon size={16} />{DOC}</Tab>
          <Tab role="tab" aria-selected="false"><TraceIcon size={17} />{DOC}</Tab>
        </TabStrip>

        <ChildWindow>
          <ChildTitle>
            <TraceIcon size={20} full />
            <ChildCaption>{DOC}</ChildCaption>
            <Caption />
          </ChildTitle>
          <Client $dark><PlotView /></Client>
        </ChildWindow>

        <ChildWindow $active>
          <ChildTitle>
            <TransistorIcon size={20} />
            <ChildCaption $active>{DOC}</ChildCaption>
            <Caption active />
          </ChildTitle>
          <Client><SchematicView /></Client>
        </ChildWindow>
      </Workspace>

      <StatusBar>
        <span>x = 0.00ms</span>
        <span>y = 3.283mV</span>
      </StatusBar>
    </Shell>
  );
}
